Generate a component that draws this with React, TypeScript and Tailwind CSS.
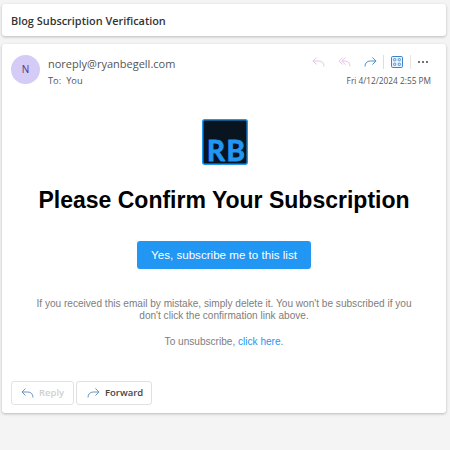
import React from "react";

function ReplyIcon({ className = "", flip = false, all = false }: { className?: string; flip?: boolean; all?: boolean }) {
  return (
    <svg viewBox="0 0 13 10" className={className} fill="none" stroke="currentColor" strokeWidth="1" strokeLinecap="round" strokeLinejoin="round">
      <g transform={flip ? "translate(13 0) scale(-1 1)" : undefined}>
        {all ? (
          <>
            <path d="M4.3.9 1 4.1l3.3 3.3M7.1.9 3.8 4.1l3.3 3.3" />
            <path d="M4 4.1h3.4c2.8 0 4.4 2 4.6 4.9" />
          </>
        ) : (
          <>
            <path d="M4.3.8 1 4l3.3 3.3" />
            <path d="M1.2 4h5.4C9.9 4 12 6 12 9.1" />
          </>
        )}
      </g>
    </svg>
  );
}

function AppsIcon() {
  return (
    <svg viewBox="0 0 12 12" className="size-3 text-[#3f82c8]" fill="none" stroke="currentColor">
      <rect x=".5" y=".5" width="11" height="11" rx="1.3" fill="#eaf4ff" />
      <rect x="2.6" y="2.6" width="2.2" height="2.2" rx=".5" strokeWidth=".8" />
      <rect x="7.2" y="2.6" width="2.2" height="2.2" rx=".5" strokeWidth=".8" />
      <rect x="2.6" y="7.2" width="2.2" height="2.2" rx=".5" strokeWidth=".8" />
      <rect x="7.2" y="7.2" width="2.2" height="2.2" rx=".5" strokeWidth=".8" />
    </svg>
  );
}

function Toolbar() {
  return (
    <div className="flex h-[14px] items-center">
      <ReplyIcon className="h-[10px] w-[13px] text-[#e4c5e6]" />
      <ReplyIcon all className="ml-[13px] h-[10px] w-[13px] text-[#e4c5e6]" />
      <ReplyIcon flip className="ml-[13px] h-[10px] w-[13px] text-[#4d8fd0]" />
      <span className="ml-[6px] h-[14px] w-px bg-[#dedede]" />
      <span className="ml-[7px]"><AppsIcon /></span>
      <span className="ml-[7px] h-[14px] w-px bg-[#e6e6e6]" />
      <svg viewBox="0 0 10 2" className="ml-[7px] mr-[3px] h-[2px] w-[10px]" fill="#444">
        <circle cx="1" cy="1" r="1" />
        <circle cx="5" cy="1" r="1" />
        <circle cx="9" cy="1" r="1" />
      </svg>
    </div>
  );
}

function Logo() {
  return (
    <svg viewBox="0 0 46 46" className="ml-px size-[46px] overflow-visible">
      <rect x=".75" y=".75" width="44.5" height="44.5" rx="2" fill="#081521" stroke="#2196f3" strokeWidth="1.5" />
      <text x="5" y="42" className="font-[Lato,sans-serif] text-[28px] font-bold leading-none" fill="#2196f3" stroke="#2196f3" strokeWidth=".8" textLength="38" lengthAdjust="spacing">RB</text>
    </svg>
  );
}

export default function App() {
  return (
    <main className="h-[450px] w-[450px] overflow-hidden bg-[#f4f4f4] pl-[2px] pr-[4px] pt-1 font-['Open_Sans',sans-serif]">
      <header className="flex h-8 items-center rounded-[3px] bg-white pl-[9px] pt-[2px] shadow-[0_1px_3px_rgba(0,0,0,0.24)]">
        <h1 className="whitespace-nowrap text-[10.9px] font-semibold text-[#333]">Blog Subscription Verification</h1>
      </header>

      <article className="mt-2 flex h-[369px] flex-col rounded-[3px] bg-white px-[9px] shadow-[0_1px_3px_rgba(0,0,0,0.24)]">
        <div className="flex h-[75px] pt-[11px]">
          <div className="flex size-[29px] items-center justify-center rounded-full bg-[#d4cbf7] text-[10px] font-medium text-[#51327b]">N</div>
          <div className="ml-[8px] whitespace-nowrap text-[#555]">
            <div className="mt-[1px] text-[11px] leading-[16px]">noreply@ryanbegell.com</div>
            <div className="mt-[1px] flex gap-[5px] text-[9.3px] leading-[16px]"><span>To:</span><span>You</span></div>
          </div>
          <div className="ml-auto mr-[6px] flex flex-col items-end">
            <Toolbar />
            <div className="mt-[5px] whitespace-nowrap text-[8.3px] leading-[14px] text-[#555]">Fri 4/12/2024 2:55 PM</div>
          </div>
        </div>

        <div className="flex flex-col items-center font-['Liberation_Sans',Arial,sans-serif]">
          <Logo />
          <h2 className="mt-[21px] whitespace-nowrap text-[23px] font-bold leading-[29px] text-black">Please Confirm Your Subscription</h2>
          <button className="mt-[26px] h-[28px] w-[174px] whitespace-nowrap rounded-[3px] bg-[#2196f3] text-[11.6px] text-white">Yes, subscribe me to this list</button>
          <p className="mt-[29px] whitespace-nowrap text-center text-[10.08px] leading-[11.5px] text-[#7d7d7d]">
            If you received this email by mistake, simply delete it. You won't be subscribed if you<br />don't click the confirmation link above.
          </p>
          <p className="mt-[15px] text-[10.08px] leading-[11px] text-[#7d7d7d]">To unsubscribe, <a className="text-[#2196f3]">click here</a>.</p>
        </div>

        <footer className="mb-[8px] mt-auto flex gap-[2px] text-[9.5px]">
          <button className="flex h-6 w-[63px] items-center rounded-[3px] border border-[#e3e3e3] pl-[9px] font-semibold text-[#cfcfcf]">
            <ReplyIcon className="h-[10px] w-[13px] text-[#6b93c2]" /><span className="ml-[5px] pt-px">Reply</span>
          </button>
          <button className="flex h-6 w-[76px] items-center rounded-[3px] border border-[#e0e0e0] pl-[10px] font-semibold text-[#444]">
            <ReplyIcon flip className="h-[10px] w-[13px] text-[#6b93c2]" /><span className="ml-[5px] pt-px">Forward</span>
          </button>
        </footer>
      </article>
    </main>
  );
}
